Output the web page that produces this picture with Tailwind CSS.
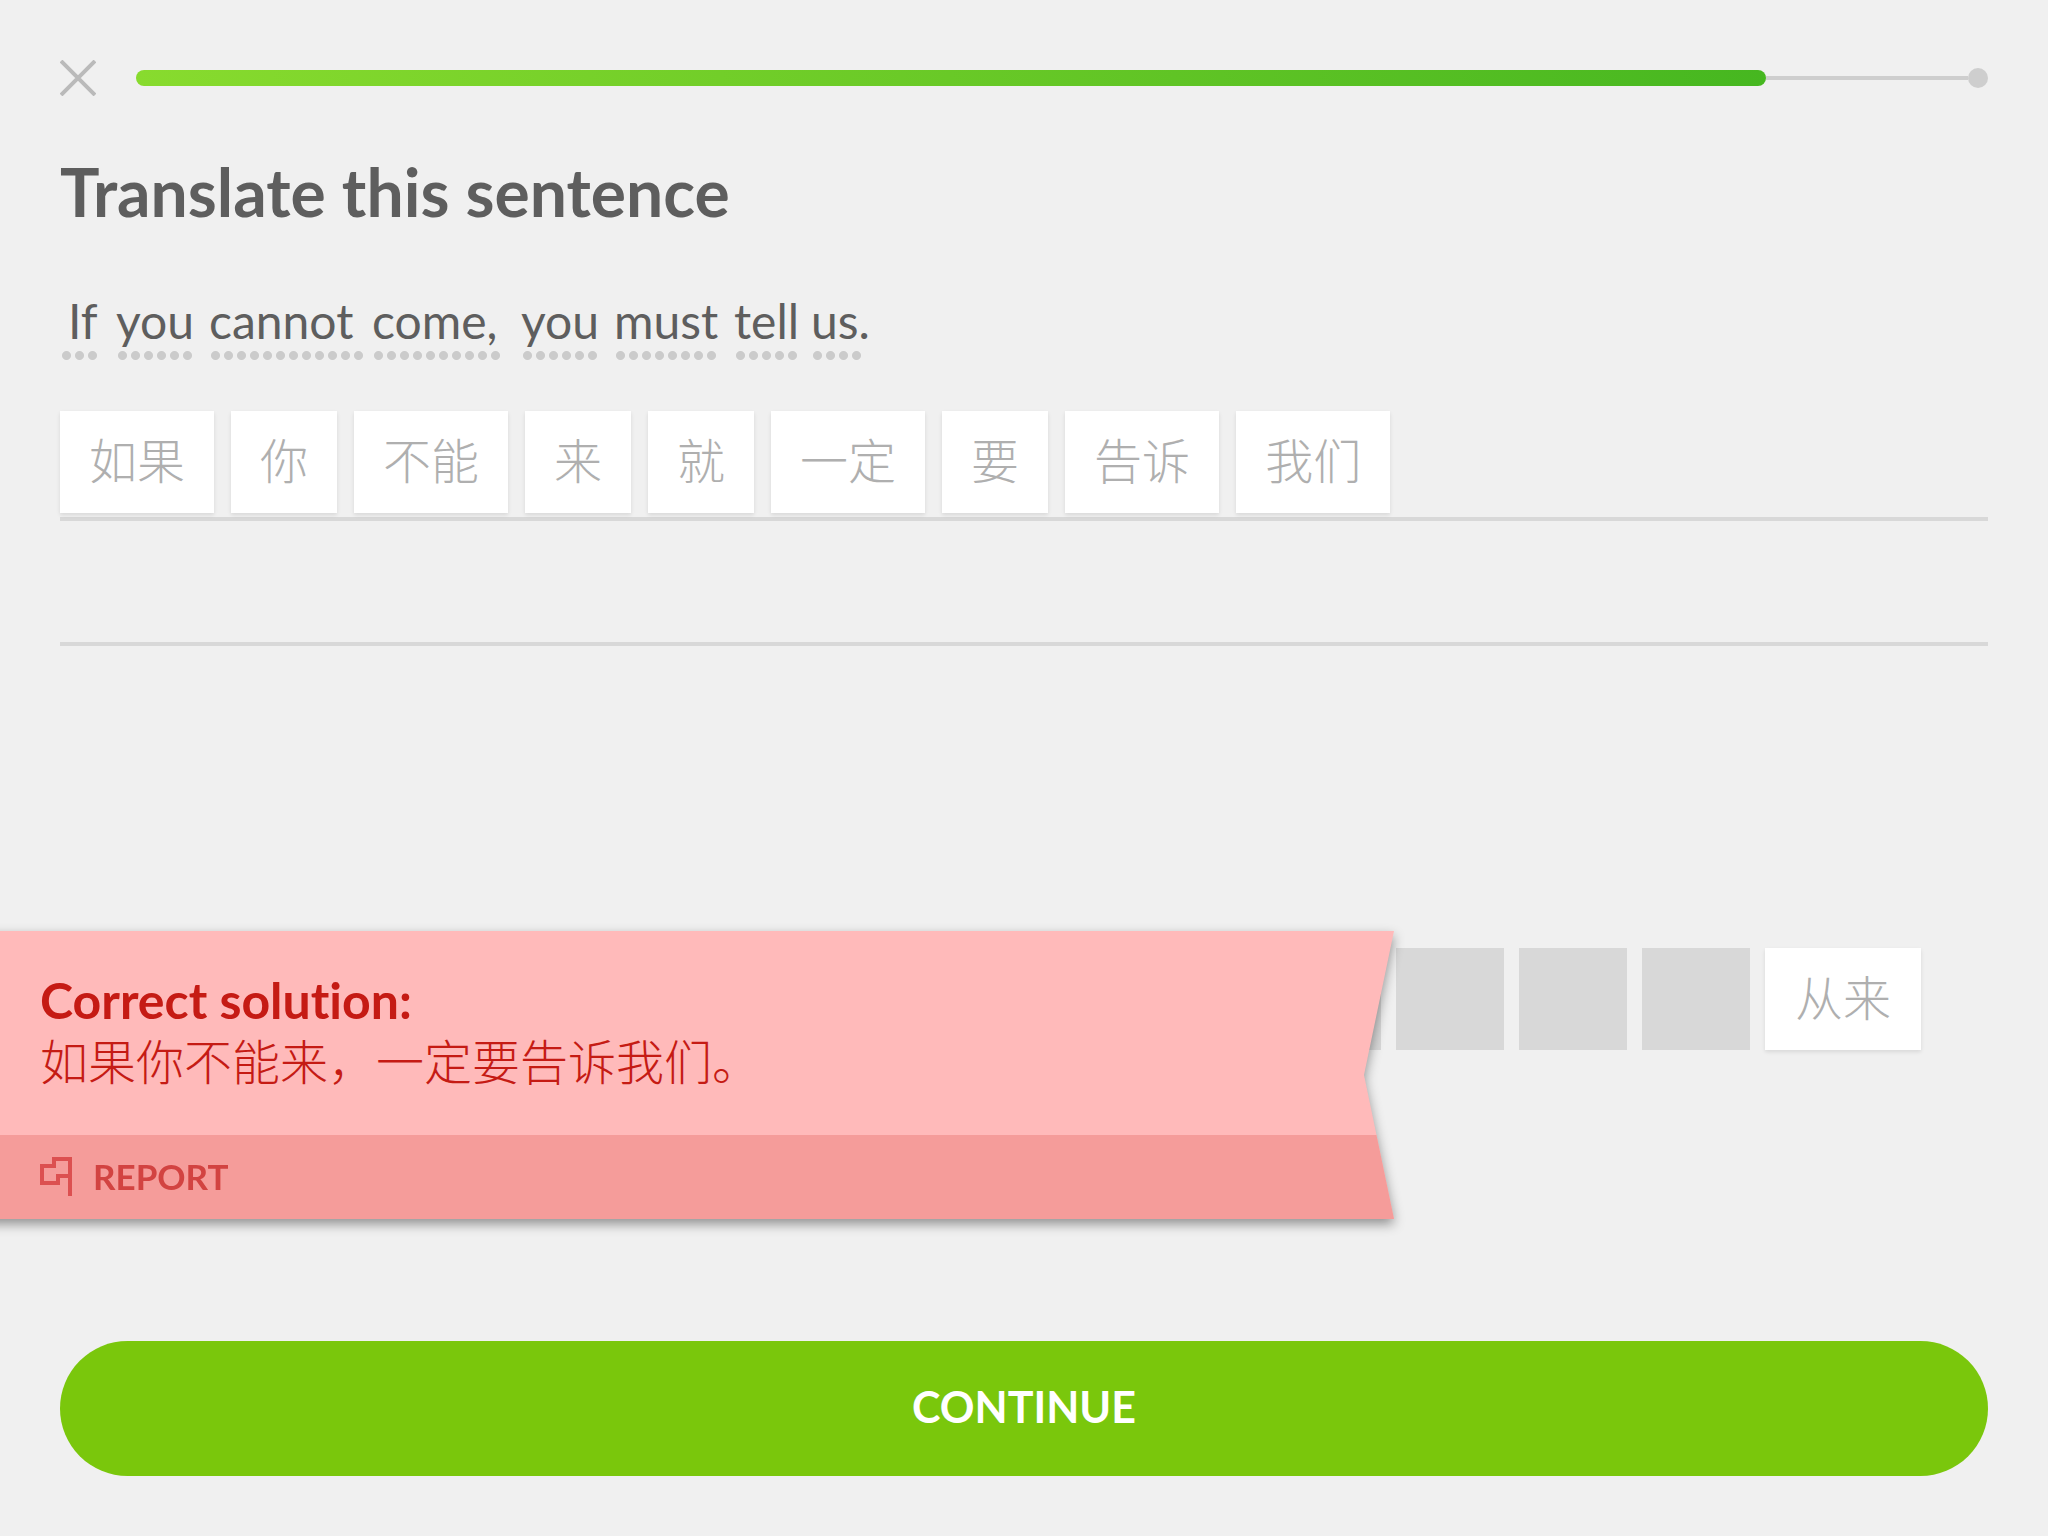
<!DOCTYPE html>
<html lang="en">
<head>
<meta charset="UTF-8" />
<meta name="viewport" content="width=device-width, initial-scale=1.0" />
<title>Translate this sentence</title>
<script src="https://cdn.jsdelivr.net/npm/@tailwindcss/browser@4"></script>
</head>

<body class="bg-[#f0f0f0] text-[#5e5e5e] font-[Lato,'Noto_Sans_CJK_SC',sans-serif] [font-variant-ligatures:none] flex flex-col min-h-screen px-[60px] py-[60px]">

<!-- Lesson progress -->
<header class="flex items-center gap-10">
  <button type="button" aria-label="Close" class="size-9">
    <svg viewBox="0 0 36 36" class="size-9" fill="none" stroke="#bababa" stroke-width="4"><path d="M1 1L35 35M35 1L1 35" /></svg>
  </button>
  <div role="progressbar" aria-label="Lesson progress" aria-valuenow="88" class="flex-1 flex items-center">
    <div class="h-4 w-[88%] rounded-full bg-linear-to-r from-[#88db2e] to-[#46b720]"></div>
    <div class="h-1 flex-1 bg-[#cecece]"></div>
    <div class="size-5 rounded-full bg-[#cecece]"></div>
  </div>
</header>

<main>
  <h1 class="mt-14 text-[66px] leading-20 font-bold">Translate this sentence</h1>

  <p class="mt-[61px] h-[70px] flex text-[48px] leading-14">
    <span class="w-14 flex flex-col"><a href="#" class="pl-2">If</a><span class="w-[39px] h-[13px] bg-[radial-gradient(circle,#cbcbcb_4px,transparent_5px)] bg-size-[13px_13px]"></span></span>
    <span class="w-[93px] flex flex-col"><a href="#">you</a><span class="w-[78px] h-[13px] bg-[radial-gradient(circle,#cbcbcb_4px,transparent_5px)] bg-size-[13px_13px]"></span></span>
    <span class="w-[163px] flex flex-col"><a href="#">cannot</a><span class="w-[156px] h-[13px] bg-[radial-gradient(circle,#cbcbcb_4px,transparent_5px)] bg-size-[13px_13px]"></span></span>
    <span class="w-[149px] flex flex-col"><span><a href="#">come</a>,</span><span class="w-[130px] h-[13px] bg-[radial-gradient(circle,#cbcbcb_4px,transparent_5px)] bg-size-[13px_13px]"></span></span>
    <span class="w-[93px] flex flex-col"><a href="#">you</a><span class="w-[78px] h-[13px] bg-[radial-gradient(circle,#cbcbcb_4px,transparent_5px)] bg-size-[13px_13px]"></span></span>
    <span class="w-[120px] flex flex-col"><a href="#">must</a><span class="w-[104px] h-[13px] bg-[radial-gradient(circle,#cbcbcb_4px,transparent_5px)] bg-size-[13px_13px]"></span></span>
    <span class="w-[77px] flex flex-col"><a href="#">tell</a><span class="w-[65px] h-[13px] bg-[radial-gradient(circle,#cbcbcb_4px,transparent_5px)] bg-size-[13px_13px]"></span></span>
    <span class="flex flex-col"><span><a href="#">us</a>.</span><span class="w-[52px] h-[13px] bg-[radial-gradient(circle,#cbcbcb_4px,transparent_5px)] bg-size-[13px_13px]"></span></span>
  </p>

  <!-- Answer lines -->
  <div class="mt-12 h-[110px] border-b-4 border-[#d8d8d8] flex items-start gap-[17px] text-[48px] font-light text-[#afafaf]">
    <button type="button" class="h-[102px] px-[29px] pb-0.5 bg-white shadow-[0_2px_4px_rgba(0,0,0,0.1)]">如果</button>
    <button type="button" class="h-[102px] px-[29px] pb-0.5 bg-white shadow-[0_2px_4px_rgba(0,0,0,0.1)]">你</button>
    <button type="button" class="h-[102px] px-[29px] pb-0.5 bg-white shadow-[0_2px_4px_rgba(0,0,0,0.1)]">不能</button>
    <button type="button" class="h-[102px] px-[29px] pb-0.5 bg-white shadow-[0_2px_4px_rgba(0,0,0,0.1)]">来</button>
    <button type="button" class="h-[102px] px-[29px] pb-0.5 bg-white shadow-[0_2px_4px_rgba(0,0,0,0.1)]">就</button>
    <button type="button" class="h-[102px] px-[29px] pb-0.5 bg-white shadow-[0_2px_4px_rgba(0,0,0,0.1)]">一定</button>
    <button type="button" class="h-[102px] px-[29px] pb-0.5 bg-white shadow-[0_2px_4px_rgba(0,0,0,0.1)]">要</button>
    <button type="button" class="h-[102px] px-[29px] pb-0.5 bg-white shadow-[0_2px_4px_rgba(0,0,0,0.1)]">告诉</button>
    <button type="button" class="h-[102px] px-[29px] pb-0.5 bg-white shadow-[0_2px_4px_rgba(0,0,0,0.1)]">我们</button>
  </div>
  <div class="h-[125px] border-b-4 border-[#d8d8d8]"></div>
</main>

<!-- Word bank, with the result ribbon over it -->
<section class="relative -mx-[60px] mt-[285px] h-[288px] pt-[17px]">
  <div class="flex justify-end gap-[15px] pr-[127px] text-[48px] font-light text-[#afafaf]">
    <div class="w-[156px] h-[102px] bg-[#d8d8d8]"></div>
    <div class="w-[156px] h-[102px] bg-[#d8d8d8]"></div>
    <div class="w-[108px] h-[102px] bg-[#d8d8d8]"></div>
    <div class="w-[156px] h-[102px] bg-[#d8d8d8]"></div>
    <div class="w-[156px] h-[102px] bg-[#d8d8d8]"></div>
    <div class="w-[156px] h-[102px] bg-[#d8d8d8]"></div>
    <div class="w-[156px] h-[102px] bg-[#d8d8d8]"></div>
    <div class="w-[108px] h-[102px] bg-[#d8d8d8]"></div>
    <div class="w-[108px] h-[102px] bg-[#d8d8d8]"></div>
    <div class="w-[108px] h-[102px] bg-[#d8d8d8]"></div>
    <div class="w-[108px] h-[102px] bg-[#d8d8d8]"></div>
    <button type="button" class="w-[156px] h-[102px] pb-0.5 bg-white shadow-[0_2px_4px_rgba(0,0,0,0.1)]">从来</button>
  </div>

  <!-- starts left of the window so its shadow has no left end -->
  <div class="absolute -left-5 top-0 w-[1414px] drop-shadow-[0_5px_6px_rgba(0,0,0,0.4)]">
    <div class="bg-[#ffbaba] text-[#c51b14] [clip-path:polygon(0_0,100%_0,calc(100%_-_30px)_50%,100%_100%,0_100%)]">
      <div class="h-[204px] pl-[60px] pt-[38px]">
        <h2 class="text-[50px] leading-[62px] font-bold">Correct solution:</h2>
        <p lang="zh" class="text-[48px] leading-[62px] font-light">如果你不能来，一定要告诉我们。</p>
      </div>
      <button type="button" class="w-full h-[84px] pl-[60px] pb-0.5 flex items-center gap-[21px] bg-[#f59c9a] text-[#d24341] text-[35px] font-bold">
        <svg viewBox="0 0 32 39" class="w-8 h-[39px]" fill="none" stroke="#dc5050" stroke-width="4"><path d="M30 39V2H14V9H2V26H18V19H30" /></svg>
        REPORT
      </button>
    </div>
  </div>
</section>

<footer class="mt-auto">
  <button type="button" class="w-full h-[135px] pb-0.5 rounded-full bg-[#7ac70c] text-white text-[43px] font-bold">CONTINUE</button>
</footer>

</body>
</html>
